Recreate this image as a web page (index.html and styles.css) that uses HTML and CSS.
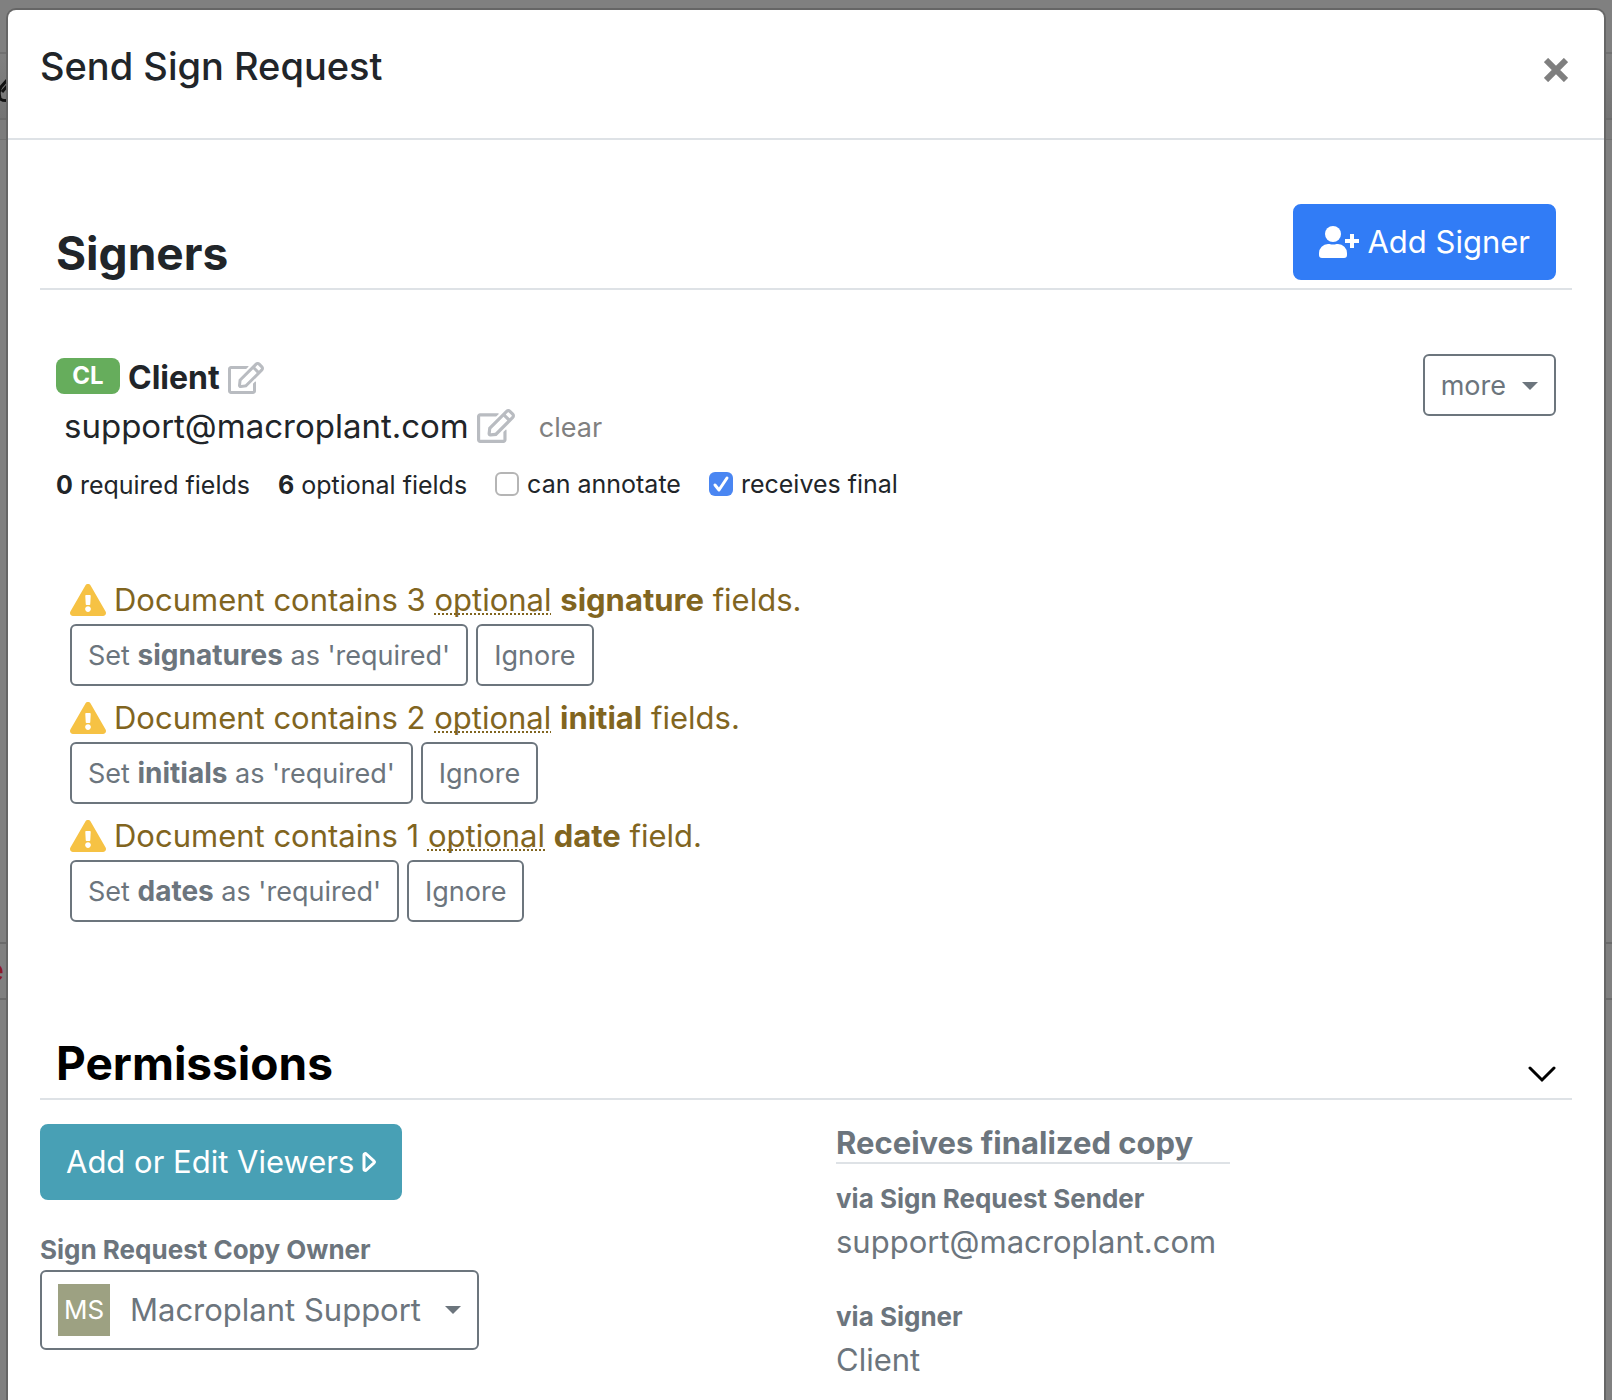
FILE: index.html
```html
<!DOCTYPE html>
<html lang="en">
<head>
<meta charset="utf-8">
<title>Send Sign Request</title>
<link rel="stylesheet" href="styles.css">
</head>
<body>
<svg class="sprite" aria-hidden="true">
  <symbol id="edit" viewBox="0 0 576 512"><path d="M402.300 344.900l32-32c5-5 13.700-1.500 13.700 5.700V464c0 26.500-21.500 48-48 48H48c-26.500 0-48-21.500-48-48V112c0-26.500 21.500-48 48-48h273.500c7.100 0 10.700 8.600 5.700 13.700l-32 32c-1.500 1.500-3.500 2.300-5.700 2.300H48v352h352V350.500c0-2.100.8-4.100 2.300-5.600zm156.600-201.800L296.300 405.700l-90.400 10c-26.200 2.900-48.500-19.200-45.600-45.600l10-90.400L432.900 17.100c22.900-22.900 59.900-22.900 82.700 0l43.200 43.200c22.900 22.900 22.900 60 .1 82.800zM460.100 174L402 115.900 216.200 301.800l-7.300 65.300 65.300-7.300L460.100 174zm64.800-79.700l-43.200-43.200c-4.100-4.100-10.800-4.100-14.800 0L436 82l58.100 58.100 30.900-30.900c4-4.200 4-10.800-.1-14.900z"/></symbol>
  <symbol id="warn" viewBox="0 0 576 512"><path d="M569.517 440.013C587.975 472.007 564.806 512 527.940 512H48.054c-36.937 0-59.999-40.055-41.577-71.987L246.423 23.985c18.467-32.009 64.720-31.951 83.154 0l239.940 416.028zM288 354c-25.405 0-46 20.595-46 46s20.595 46 46 46 46-20.595 46-46-20.595-46-46-46zm-43.673-165.346l7.418 136c.347 6.364 5.609 11.346 11.982 11.346h48.546c6.373 0 11.635-4.982 11.982-11.346l7.418-136c.375-6.874-5.098-12.654-11.982-12.654h-63.383c-6.884 0-12.356 5.780-11.981 12.654z"/></symbol>
</svg>

<div class="page" aria-hidden="true">
  <div class="page-top"></div>
  <div class="page-toolbar"><svg class="page-pen" viewBox="0 0 8 26"><path d="M8 2L1 10q-3 4-1 11q1 3 8 2.500M2 15l6-7" fill="none" stroke="#111" stroke-width="3"/></svg></div>
  <div class="page-strip"></div>
  <div class="page-main"></div>
  <div class="page-row"><span class="page-link">e</span></div>
</div>

<div class="modal" role="dialog" aria-labelledby="modal-title">
  <header class="modal-header">
    <h1 class="modal-title" id="modal-title">Send Sign Request</h1>
    <button class="close" type="button" aria-label="Close"><svg width="24" height="24" viewBox="0 0 24 24"><path d="M2 2L22 22M22 2L2 22" stroke="currentColor" stroke-width="6"/></svg></button>
  </header>

  <div class="modal-body">
    <section>
      <div class="section-head">
        <h2 class="section-title">Signers</h2>
        <button class="btn btn-primary" type="button">
          <svg width="40" height="32" viewBox="0 0 40 32" fill="currentColor"><circle cx="14" cy="8" r="8"/><path d="M9 18h1.500q3.500 1.200 7 0H19a9 9 0 0 1 9 9v2a3 3 0 0 1-3 3H3a3 3 0 0 1-3-3v-2a9 9 0 0 1 9-9z"/><path d="M33 8v14M26 15h14" stroke="currentColor" stroke-width="4"/></svg>
          Add Signer
        </button>
      </div>

      <div class="signer">
        <div>
          <div class="signer-line">
            <span class="badge">CL</span>
            <strong class="signer-name">Client</strong>
            <button class="icon-btn" type="button" aria-label="Edit name"><svg width="36" height="32"><use href="#edit"/></svg></button>
          </div>
          <div class="signer-line signer-mail">
            <span class="mail">support@macroplant.com</span>
            <button class="icon-btn" type="button" aria-label="Edit email"><svg width="38" height="34"><use href="#edit"/></svg></button>
            <a class="clear" href="#">clear</a>
          </div>
          <div class="signer-meta">
            <span><b>0</b> required fields</span>
            <span><b>6</b> optional fields</span>
            <label class="check"><input type="checkbox">can annotate</label>
            <label class="check"><input type="checkbox" checked>receives final</label>
          </div>
        </div>
        <button class="btn btn-outline more" type="button">more <span class="caret"></span></button>
      </div>

      <div class="warnings">
        <div>
          <p class="warning"><svg width="36" height="32"><use href="#warn"/></svg><span>Document contains 3 <u>optional</u> <b>signature</b> fields.</span></p>
          <div class="actions">
            <button class="btn btn-outline" type="button"><span>Set <b>signatures</b> as 'required'</span></button>
            <button class="btn btn-outline" type="button">Ignore</button>
          </div>
        </div>
        <div>
          <p class="warning"><svg width="36" height="32"><use href="#warn"/></svg><span>Document contains 2 <u>optional</u> <b>initial</b> fields.</span></p>
          <div class="actions">
            <button class="btn btn-outline" type="button"><span>Set <b>initials</b> as 'required'</span></button>
            <button class="btn btn-outline" type="button">Ignore</button>
          </div>
        </div>
        <div>
          <p class="warning"><svg width="36" height="32"><use href="#warn"/></svg><span>Document contains 1 <u>optional</u> <b>date</b> field.</span></p>
          <div class="actions">
            <button class="btn btn-outline" type="button"><span>Set <b>dates</b> as 'required'</span></button>
            <button class="btn btn-outline" type="button">Ignore</button>
          </div>
        </div>
      </div>
    </section>

    <section class="permissions">
      <div class="section-head">
        <h2 class="section-title section-title-dark">Permissions</h2>
        <button class="collapse" type="button" aria-label="Collapse permissions"><svg width="28" height="28" viewBox="0 0 28 28"><path d="M2 6L14 18L26 6" fill="none" stroke="currentColor" stroke-width="3" stroke-linecap="round"/></svg></button>
      </div>
      <div class="columns">
        <div>
          <button class="btn btn-info" type="button">Add or Edit Viewers<svg width="14" height="20" viewBox="0 0 14 20"><path d="M2 2.800C2 1.500 3.500 1.200 4.300 2L12 9.200q1 .8 0 1.600L4.300 18C3.500 18.800 2 18.500 2 17.200z" fill="none" stroke="currentColor" stroke-width="3"/></svg></button>
          <h4 class="small-title owner-title" id="owner-label">Sign Request Copy Owner</h4>
          <button class="owner" type="button" aria-haspopup="listbox" aria-labelledby="owner-label">
            <span class="avatar">MS</span>
            <span>Macroplant Support</span>
            <span class="caret"></span>
          </button>
        </div>
        <div class="receivers">
          <h3 class="receivers-title">Receives finalized copy</h3>
          <h4 class="small-title">via Sign Request Sender</h4>
          <p class="receiver receiver-first">support@macroplant.com</p>
          <h4 class="small-title">via Signer</h4>
          <p class="receiver">Client</p>
        </div>
      </div>
    </section>
  </div>
</div>
</body>
</html>
```
FILE: styles.css
```css
* { box-sizing: border-box; }

body {
  margin: 0;
  height: 100vh;
  overflow: hidden;
  display: grid;
  grid-template: 1fr / 1fr;
  background: #808080;
  color: #212529;
  font-family: Inter, "Liberation Sans", sans-serif;
  font-size: 31px;
  line-height: 48px;
}

h1, h2, h3, h4, p { margin: 0; }
b, strong { font-weight: 700; }
svg { display: block; flex: none; }
button { font: inherit; cursor: pointer; }
.sprite { display: none; }

/* Dimmed page behind the dialog */
.page { grid-area: 1 / 1; min-height: 0; overflow: hidden; }
.page-top { height: 52px; }
.page-toolbar {
  height: 68px;
  padding-top: 23px;
  border-top: 2px solid #717171;
  border-bottom: 2px solid #6c6c6c;
  background: linear-gradient(#808080, #747474);
}
.page-pen { width: 8px; height: 26px; }
.page-strip { height: 20px; border-bottom: 1px solid #717171; background: #7c7c7c; }
.page-main { height: 802px; }
.page-row {
  height: 58px;
  border: solid #6b6b6b;
  border-width: 2px 0;
  line-height: 52px;
}
.page-link { margin-left: -14px; color: #8b1a28; }

/* Dialog */
.modal {
  grid-area: 1 / 1;
  z-index: 1;
  margin: 8px 6px 0;
  border: 2px solid #666;
  border-bottom: 0;
  border-radius: 10px 10px 0 0;
  background: #fff;
}
.modal-header {
  display: flex;
  justify-content: space-between;
  padding: 26px 32px 34px;
  border-bottom: 2px solid #dee2e6;
}
.modal-title { font-size: 38px; line-height: 60px; font-weight: 500; }
.close {
  display: flex;
  align-items: center;
  height: 68px;
  padding: 0 4px;
  border: 0;
  background: none;
  color: #7f7f7f;
}
.modal-body { padding: 64px 32px 32px; }

.section-head {
  display: flex;
  justify-content: space-between;
  align-items: flex-end;
  min-height: 86px;
  padding: 0 16px 8px;
  border-bottom: 2px solid #dee2e6;
}
.section-title { font-size: 46px; line-height: 54px; font-weight: 700; }
.section-title-dark { color: #000; }

.btn {
  display: flex;
  align-items: center;
  gap: 8px;
  border: 2px solid;
  white-space: nowrap;
}
.btn-primary, .btn-info {
  padding: 12px 24px;
  border-radius: 8px;
  color: #fff;
}
.btn-primary { background: #317cf6; border-color: #317cf6; }
.btn-info { background: #48a0b5; border-color: #48a0b5; }
.btn-outline {
  padding: 9px 16px 7px;
  border-color: #6c757d;
  border-radius: 6px;
  background: #fff;
  color: #6c757d;
  font-size: 27px;
  line-height: 42px;
}
.btn-outline b { font-size: 28px; line-height: 40px; }
.caret {
  border: 8px solid transparent;
  border-top-color: currentColor;
  border-bottom: 0;
}

/* Signer */
.signer {
  display: flex;
  justify-content: space-between;
  align-items: flex-start;
  padding: 64px 16px 0;
}
.signer-line { display: flex; align-items: center; gap: 8px; }
.signer-name { font-size: 32px; }
.signer-mail { padding-left: 8px; font-size: 33px; }
.badge {
  width: 64px;
  height: 36px;
  margin-bottom: 4px;
  border-radius: 8px;
  background: #66ad5c;
  color: #fff;
  font-size: 24px;
  line-height: 36px;
  font-weight: 700;
  text-align: center;
}
.icon-btn { padding: 0; border: 0; background: none; color: #b9bcc1; }
.icon-btn svg { fill: currentColor; }
.clear { margin-left: 16px; padding-top: 4px; color: #808080; font-size: 27px; line-height: 44px; text-decoration: none; }
.signer-meta {
  display: flex;
  gap: 28px;
  padding-top: 16px;
  font-size: 25px;
  line-height: 38px;
}
.check { display: flex; align-items: center; gap: 8px; height: 36px; }
.check input {
  appearance: none;
  width: 24px;
  height: 24px;
  margin: 0;
  border: 2px solid #b5b5b5;
  border-radius: 6px;
  background: #fff;
}
.check input:checked {
  border: 0;
  background: #4a86f2 url("data:image/svg+xml,%3Csvg xmlns='http://www.w3.org/2000/svg' viewBox='0 0 24 24'%3E%3Cpath d='M6 13l4 5 8-12' fill='none' stroke='white' stroke-width='3' stroke-linecap='round' stroke-linejoin='round'/%3E%3C/svg%3E");
}
.more { gap: 16px; }

.warnings {
  display: grid;
  gap: 8px;
  padding: 72px 30px 0;
}
.warning { display: flex; align-items: center; gap: 8px; color: #81651f; }
.warning svg { fill: #f6c244; }
.warning u {
  text-decoration: underline dotted 2px;
  text-underline-offset: 2px;
  text-decoration-skip-ink: none;
}
.actions { display: flex; gap: 8px; }

/* Permissions */
.permissions { padding-top: 92px; }
.collapse { padding: 0; border: 0; background: none; color: #000; }
.columns {
  display: grid;
  grid-template-columns: 1fr 1fr;
  column-gap: 60px;
  padding-top: 24px;
  color: #6c757d;
}
.small-title { font-size: 26px; line-height: 38px; font-weight: 700; }
.owner-title { padding: 31px 0 1px; }
.owner {
  display: flex;
  align-items: center;
  gap: 20px;
  padding: 12px 16px;
  border: 2px solid #6c757d;
  border-radius: 6px;
  background: #fff;
  color: #6c757d;
}
.avatar {
  width: 52px;
  height: 52px;
  background: #9da182;
  color: #fff;
  font-size: 26px;
  line-height: 52px;
}
.owner .caret { margin-left: 4px; }
.receivers-title {
  width: 394px;
  max-width: 100%;
  margin-bottom: 16px;
  border-bottom: 2px solid #dee2e6;
  font-size: 31px;
  line-height: 38px;
  font-weight: 700;
}
.receiver-first { margin-bottom: 32px; }
```
